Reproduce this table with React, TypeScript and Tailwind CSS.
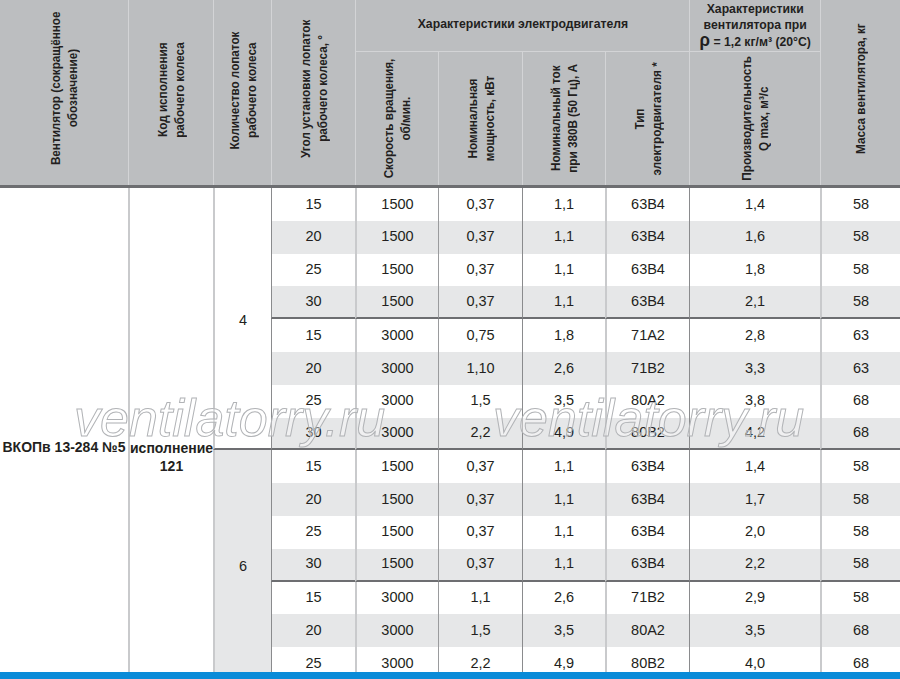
import React from "react";

const COLS = "grid-cols-[128px_85px_58px_84px_83px_84px_83px_84px_131px_80px]";

function V({ children }: { children: React.ReactNode }) {
  return (
    <div className="[writing-mode:vertical-rl] rotate-180 scale-y-[0.9] text-center leading-[17px] whitespace-nowrap">
      {children}
    </div>
  );
}

const rows: string[][] = [
  ["15", "1500", "0,37", "1,1", "63В4", "1,4", "58"],
  ["20", "1500", "0,37", "1,1", "63В4", "1,6", "58"],
  ["25", "1500", "0,37", "1,1", "63В4", "1,8", "58"],
  ["30", "1500", "0,37", "1,1", "63В4", "2,1", "58"],
  ["15", "3000", "0,75", "1,8", "71А2", "2,8", "63"],
  ["20", "3000", "1,10", "2,6", "71В2", "3,3", "63"],
  ["25", "3000", "1,5", "3,5", "80А2", "3,8", "68"],
  ["30", "3000", "2,2", "4,9", "80В2", "4,2", "68"],
  ["15", "1500", "0,37", "1,1", "63В4", "1,4", "58"],
  ["20", "1500", "0,37", "1,1", "63В4", "1,7", "58"],
  ["25", "1500", "0,37", "1,1", "63В4", "2,0", "58"],
  ["30", "1500", "0,37", "1,1", "63В4", "2,2", "58"],
  ["15", "3000", "1,1", "2,6", "71В2", "2,9", "58"],
  ["20", "3000", "1,5", "3,5", "80А2", "3,5", "68"],
  ["25", "3000", "2,2", "4,9", "80В2", "4,0", "68"],
];

// left border style per column index 3..9
const leftBorder = [
  "border-l border-[#8a8b8d]", // 271
  "border-l-2 border-[#c9cacc]", // 355
  "border-l border-[#9a9b9d]", // 438
  "border-l border-[#8a8b8d]", // 522
  "border-l-2 border-[#c9cacc]", // 605
  "border-l border-[#8a8b8d]", // 689
  "border-l-2 border-[#c9cacc]", // 820
];

export default function App() {
  return (
    <div className="w-[900px] h-[679px] overflow-hidden flex flex-col bg-white text-[#231f20]">
      <div className="flex-1 overflow-hidden">
        {/* Header */}
        <div
          className={`grid ${COLS} grid-rows-[52px_133px] bg-[#bcbec0] border-b-[3px] border-[#6d6e71] font-['Liberation_Sans',sans-serif] font-bold text-[13px]`}
        >
          <div className="row-[span_2/span_2] flex items-center justify-center pb-2">
            <V>
              Вентилятор (сокращённое
              <br />
              обозначение)
            </V>
          </div>
          <div className="row-[span_2/span_2] flex items-center justify-center border-l border-[#d3d4d6] pb-1">
            <V>
              Код исполнения
              <br />
              рабочего колеса
            </V>
          </div>
          <div className="row-[span_2/span_2] flex items-center justify-center border-l border-[#d3d4d6] pb-1">
            <V>
              Количество лопаток
              <br />
              рабочего колеса
            </V>
          </div>
          <div className="row-[span_2/span_2] flex items-center justify-center border-l border-[#d3d4d6] pb-2">
            <V>
              Угол установки лопаток
              <br />
              рабочего колеса, °
            </V>
          </div>
          <div className="col-[span_4/span_4] flex items-center justify-center border-l border-b border-[#d3d4d6] pb-[4px]">
            <div className="scale-x-[0.94] whitespace-nowrap">Характеристики электродвигателя</div>
          </div>
          <div className="flex items-center justify-center border-l border-b border-[#d3d4d6] text-center leading-[16px]">
            <div className="scale-x-[0.94] whitespace-nowrap">
              Характеристики
              <br />
              вентилятора при
              <br />
              <span className="text-[18px] leading-[14px]">ρ</span> = 1,2 кг/м³ (20°С)
            </div>
          </div>
          <div className="row-[span_2/span_2] flex items-center justify-center border-l border-[#d3d4d6] pb-2">
            <V>Масса вентилятора, кг</V>
          </div>
          <div className="flex items-center justify-center border-l border-[#d3d4d6]">
            <V>
              Скорость вращения,
              <br />
              об/мин.
            </V>
          </div>
          <div className="flex items-center justify-center border-l border-[#d3d4d6]">
            <V>
              Номинальная
              <br />
              мощность, кВт
            </V>
          </div>
          <div className="flex items-center justify-center border-l border-[#d3d4d6]">
            <V>
              Номинальный ток
              <br />
              при 380В (50 Гц), А
            </V>
          </div>
          <div className="flex items-center justify-center border-l border-[#d3d4d6]">
            <V>
              Тип
              <br />
              электродвигателя *
            </V>
          </div>
          <div className="flex items-center justify-center border-l border-[#d3d4d6]">
            <V>
              Производительность
              <br />Q max, м³/с
            </V>
          </div>
        </div>

        {/* Body */}
        <div className="relative">
          <div
            className={`grid ${COLS} grid-rows-[repeat(15,32.8px)] font-['Liberation_Sans',sans-serif] text-[14.5px]`}
          >
            <div className="col-start-1 row-start-1 row-[span_15/span_15] flex items-center justify-center pt-[28px] font-bold text-[14px] whitespace-nowrap">
              ВКОПв 13-284 №5
            </div>
            <div className="col-start-2 row-start-1 row-[span_15/span_15] flex items-center justify-center pt-[46px] border-l-2 border-[#c9cacc] font-bold text-[14px] leading-[18px] text-center">
              <div>
                исполнение
                <br />
                121
              </div>
            </div>
            <div className="col-start-3 row-start-1 row-[span_8/span_8] flex items-center justify-center pt-[5px] border-l-2 border-[#c9cacc] border-b-2 border-b-[#6d6e71]">
              4
            </div>
            <div className="col-start-3 row-start-9 row-[span_7/span_7] flex items-center justify-center pt-[4px] border-l-2 border-[#c9cacc] bg-[#e6e7e8]">
              6
            </div>
            {rows.map((r, i) => {
              const stripe = i % 2 === 1 ? "bg-[#e6e7e8]" : "bg-white";
              const sep = i === 3 || i === 7 || i === 11 ? "border-b-2 border-b-[#6d6e71]" : "";
              return r.map((v, j) => (
                <div
                  key={`${i}-${j}`}
                  style={{ gridRow: i + 1, gridColumn: j + 4 }}
                  className={`flex items-center justify-center ${stripe} ${leftBorder[j]} ${sep}`}
                >
                  {v}
                </div>
              ));
            })}
          </div>

          {/* Watermarks */}
          <div className="absolute left-[74px] top-[204px] font-['Liberation_Sans',sans-serif] italic text-[52px] leading-none text-white/40 [-webkit-text-stroke:1px_#b1b3b6] pointer-events-none whitespace-nowrap">
            ventilatorry.ru
          </div>
          <div className="absolute left-[493px] top-[204px] font-['Liberation_Sans',sans-serif] italic text-[52px] leading-none text-white/40 [-webkit-text-stroke:1px_#b1b3b6] pointer-events-none whitespace-nowrap">
            ventilatorry.ru
          </div>
        </div>
      </div>
      <div className="h-[7px] shrink-0 bg-[#0a8bd8]" />
    </div>
  );
}
